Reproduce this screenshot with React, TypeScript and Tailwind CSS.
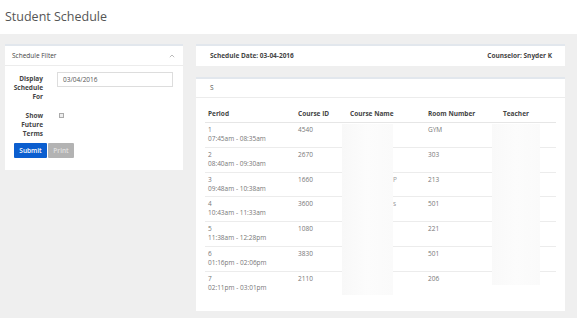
import React from "react";

const rows = [
  { p: "1", t: "07:45am - 08:35am", id: "4540", room: "GYM", tail: "" },
  { p: "2", t: "08:40am - 09:30am", id: "2670", room: "303", tail: "" },
  { p: "3", t: "09:48am - 10:38am", id: "1660", room: "213", tail: "P" },
  { p: "4", t: "10:43am - 11:33am", id: "3600", room: "501", tail: "s" },
  { p: "5", t: "11:38am - 12:28pm", id: "1080", room: "221", tail: "" },
  { p: "6", t: "01:16pm - 02:06pm", id: "3830", room: "501", tail: "" },
  { p: "7", t: "02:11pm - 03:01pm", id: "2110", room: "206", tail: "" },
];

export default function App() {
  return (
    <div
      className="w-[577px] h-[318px] overflow-hidden bg-[#efefef] text-[#555]"
      style={{ fontFamily: '"Open Sans", "Liberation Sans", sans-serif' }}
    >
      <div className="h-[34px] bg-white flex items-center pl-[5px] text-[12.5px] text-[#555]">
        Student Schedule
      </div>
      <div className="flex items-start pt-[10px] pl-[5px] gap-[13px]">
        {/* Left panel */}
        <div className="w-[178px] bg-white border-t-2 border-[#e2e7ed]">
          <div className="h-[20px] flex items-center justify-between pl-[7px] pr-[7px] border-b border-[#ececec] text-[6.5px] text-[#444]">
            <span>Schedule Filter</span>
            <svg width="6" height="4" viewBox="0 0 6 4" className="mr-[1px]">
              <path d="M0.8 3.2 L3 1 L5.2 3.2" fill="none" stroke="#aaa" strokeWidth="0.8" />
            </svg>
          </div>
          <div className="pt-[6px] pb-[12px]">
            <div className="flex items-start">
              <div className="w-[38px] text-right font-bold text-[6.5px] leading-[9px] text-[#444] pt-[2px]">
                Display
                <br />
                Schedule
                <br />
                For
              </div>
              <div className="ml-[14px] w-[116px] h-[15px] border border-[#ddd] flex items-center pl-[5px] text-[6.5px] text-[#555]">
                03/04/2016
              </div>
            </div>
            <div className="flex items-start mt-[10px]">
              <div className="w-[38px] text-right font-bold text-[6.5px] leading-[9px] text-[#444]">
                Show
                <br />
                Future
                <br />
                Terms
              </div>
              <div className="ml-[16px] mt-[2px] w-[5px] h-[5px] border border-[#aaa] bg-[#eee]"></div>
            </div>
            <div className="flex mt-[5px] pl-[9px] gap-[1px]">
              <div className="w-[33px] h-[15px] bg-[#0b5ecf] text-white text-[6.5px] font-semibold flex items-center justify-center rounded-[1px]">
                Submit
              </div>
              <div className="w-[26px] h-[15px] bg-[#b3b3b3] text-[#e0e0e0] text-[6.5px] font-semibold flex items-center justify-center rounded-[1px]">
                Print
              </div>
            </div>
          </div>
        </div>

        {/* Right column */}
        <div className="w-[369px] flex flex-col gap-[11px]">
          <div className="h-[22px] bg-white border-t-2 border-[#e2e7ed] flex items-center justify-between pl-[14px] pr-[13px] text-[6.5px] font-bold text-[#444]">
            <span>Schedule Date: 03-04-2016</span>
            <span>Counselor: Snyder K</span>
          </div>
          <div className="h-[234px] bg-white border-t-2 border-[#e2e7ed]">
            <div className="h-[19px] flex items-center pl-[14px] border-b border-[#ececec] text-[6.5px] text-[#555]">
              S
            </div>
            <div className="relative mx-[9px] mt-[11px]">
              <div className="flex h-[14px] items-start font-bold text-[6.5px] text-[#444] border-b border-[#e6e6e6]">
                <div className="w-[90px] pl-[3px]">Period</div>
                <div className="w-[52px] pl-[3px]">Course ID</div>
                <div className="w-[78px] pl-[3px]">Course Name</div>
                <div className="w-[75px] pl-[3px]">Room Number</div>
                <div className="w-[56px] pl-[3px]">Teacher</div>
              </div>
              {rows.map((r, i) => (
                <div
                  key={r.p}
                  className={`flex h-[24.8px] pt-[2px] text-[6.5px] leading-[9px] text-[#777] ${i < rows.length - 1 ? "border-b border-[#ececec]" : ""}`}
                >
                  <div className="w-[90px] pl-[3px]">
                    {r.p}
                    <br />
                    {r.t}
                  </div>
                  <div className="w-[52px] pl-[3px]">{r.id}</div>
                  <div className="w-[78px] pl-[46px] text-[#999]">{r.tail}</div>
                  <div className="w-[75px] pl-[3px]">{r.room}</div>
                  <div className="w-[56px] pl-[3px]"></div>
                </div>
              ))}
              <div className="absolute left-[137px] top-[15px] w-[51px] h-[171px] bg-gradient-to-r from-[#f8f8f8] via-[#fcfcfc] to-[#fafafa]"></div>
              <div className="absolute left-[287px] top-[15px] w-[48px] h-[161px] bg-gradient-to-r from-[#f9f9f9] via-[#fcfcfc] to-[#fafafa]"></div>
            </div>
          </div>
        </div>
      </div>
    </div>
  );
}
